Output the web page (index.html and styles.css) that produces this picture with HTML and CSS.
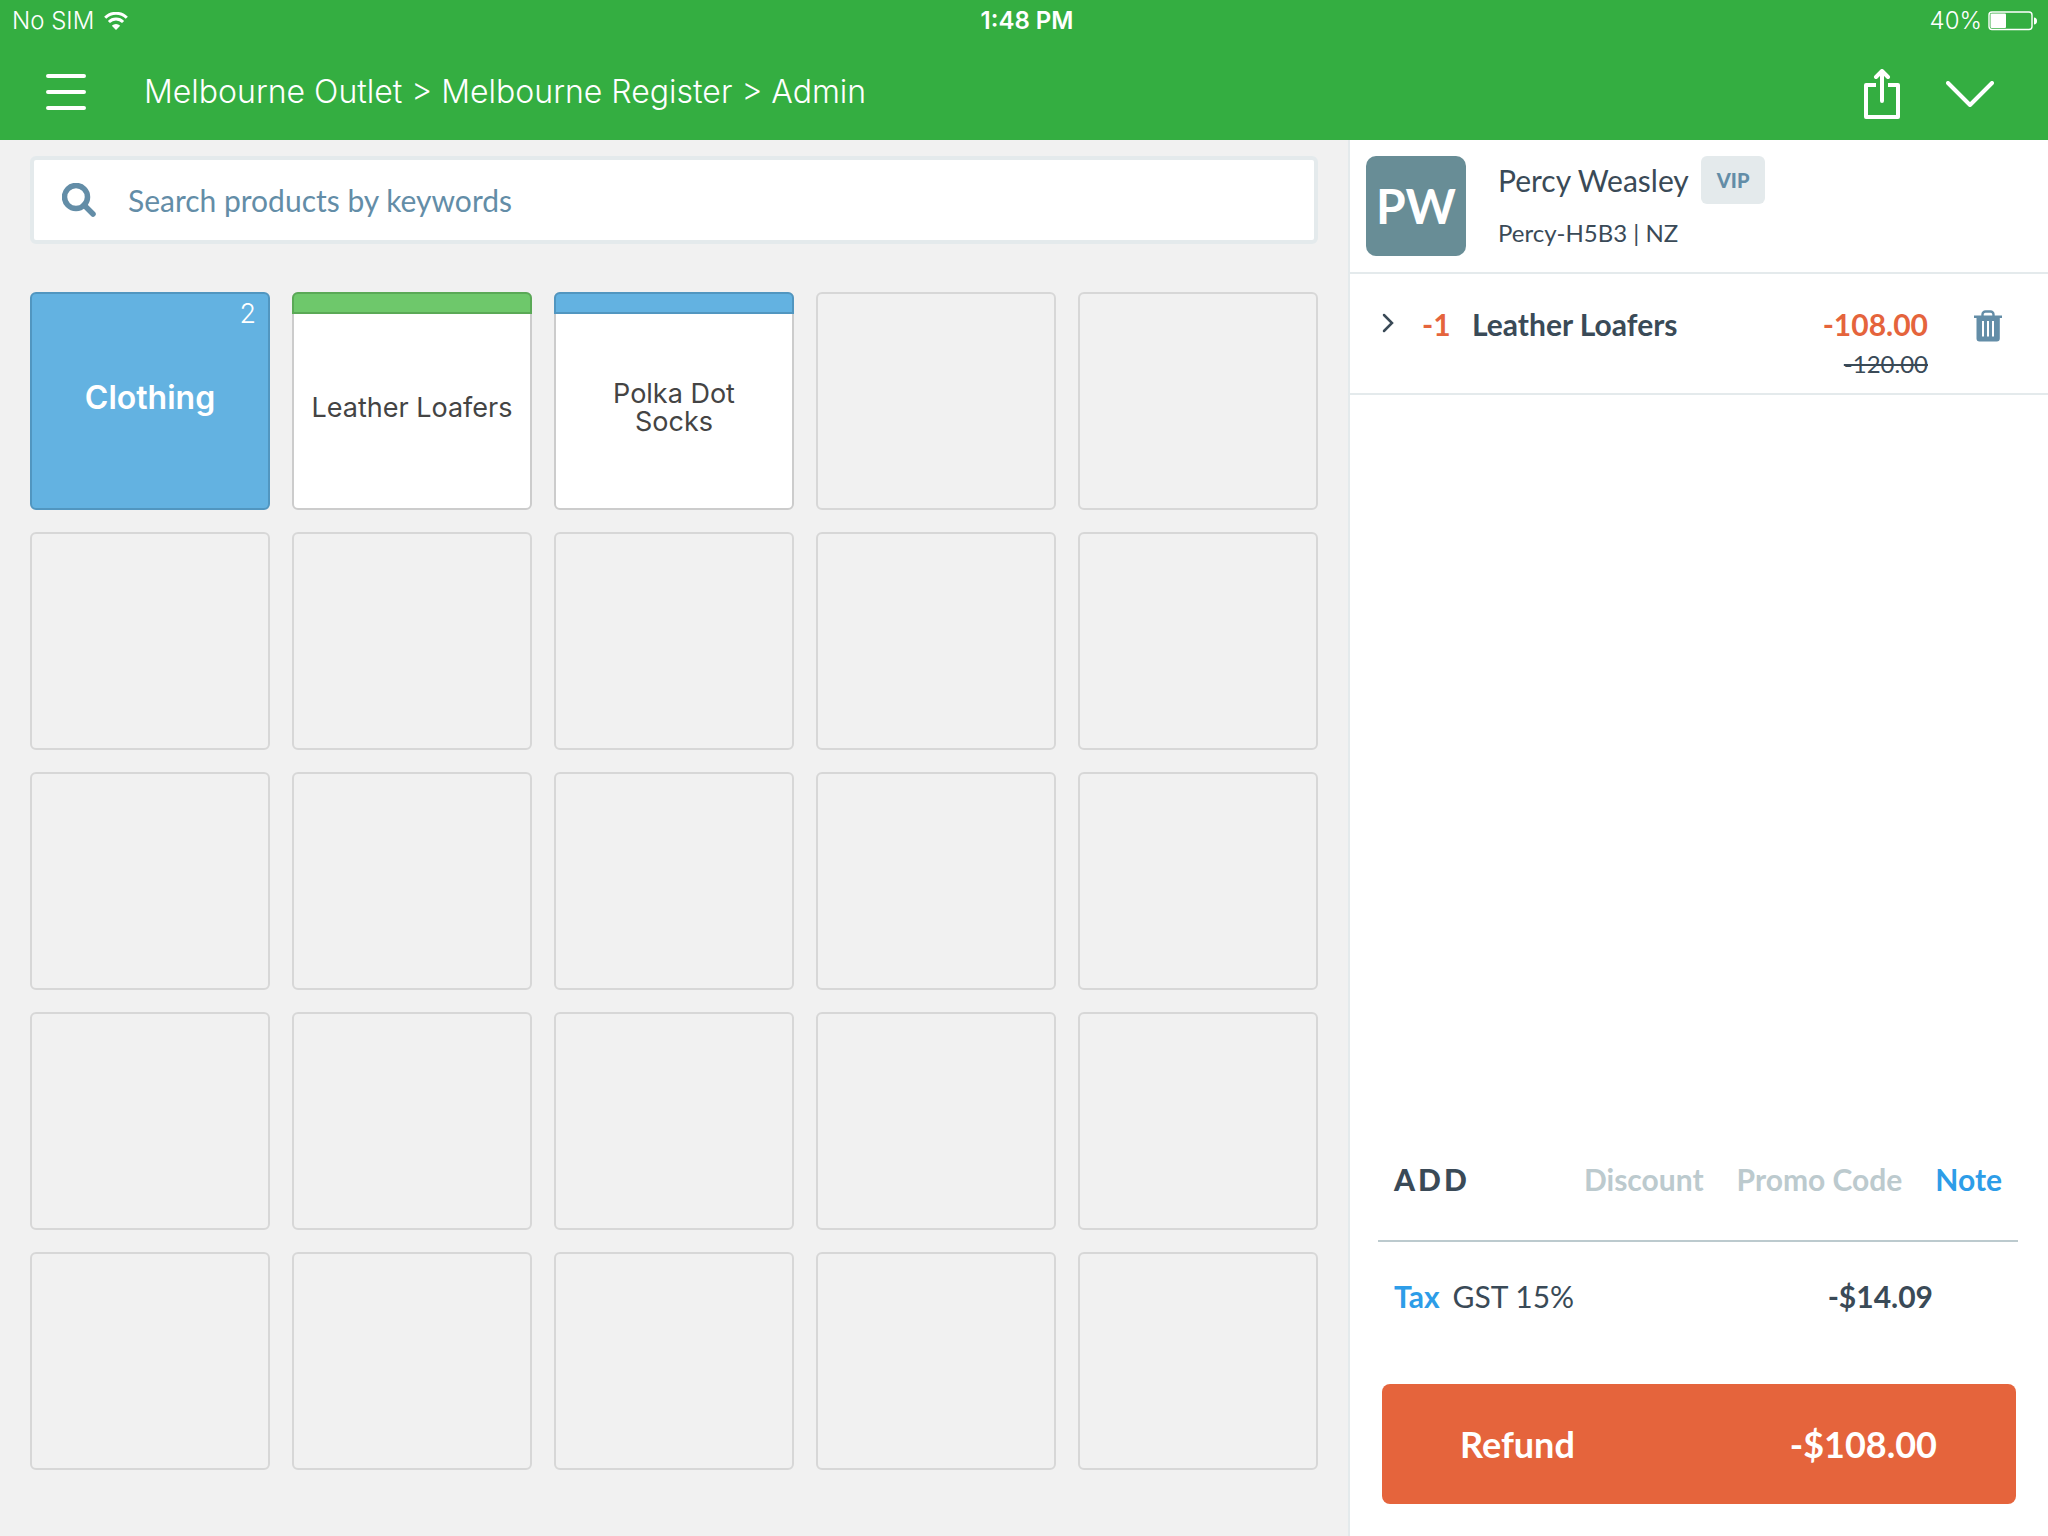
FILE: index.html
```html
<!DOCTYPE html>
<html lang="en">
<head>
<meta charset="utf-8">
<meta name="viewport" content="width=device-width, initial-scale=1">
<title>Melbourne Register</title>
<link rel="stylesheet" href="styles.css">
</head>
<body>
<div class="app">
  <header class="header">
    <div class="status">
      <div class="status-left">
        <span>No SIM</span>
        <svg class="wifi" width="24" height="18" viewBox="0 0 24 18" aria-hidden="true">
          <path d="M1.2 5.8a15.2 15.2 0 0 1 21.6 0" fill="none" stroke="#fff" stroke-width="3"/>
          <path d="M4.9 10a10 10 0 0 1 14.2 0" fill="none" stroke="#fff" stroke-width="3"/>
          <path d="M12 18l-4.2-4.2a6 6 0 0 1 8.4 0z" fill="#fff"/>
        </svg>
      </div>
      <div class="status-time">1:48 PM</div>
      <div class="status-right">
        <span>40%</span>
        <svg width="50" height="20" viewBox="0 0 50 20" aria-hidden="true">
          <rect x="1" y="1" width="43" height="17.5" rx="3" fill="none" stroke="#fff" stroke-width="1.4"/>
          <rect x="2.500" y="2.500" width="15.500" height="14.500" rx="1" fill="#fff"/>
          <path d="M46 6.500c1.800 0 3 1.200 3 3.500s-1.200 3.500-3 3.500z" fill="#fff"/>
        </svg>
      </div>
    </div>
    <div class="navbar">
      <button class="icon-button" type="button" aria-label="Menu">
        <svg width="40" height="36" viewBox="0 0 40 36"><path d="M2 2h36M2 18h36M2 34h36" stroke="#fff" stroke-width="4" stroke-linecap="round"/></svg>
      </button>
      <h1 class="title">Melbourne Outlet &gt; Melbourne Register &gt; Admin</h1>
      <div class="nav-actions">
        <button class="icon-button" type="button" aria-label="Share">
          <svg width="36" height="50" viewBox="0 0 36 50"><path d="M12 16H2v32h32V16H24" fill="none" stroke="#fff" stroke-width="4" stroke-linejoin="round"/><path d="M18 32V3M12 8l6-6 6 6" fill="none" stroke="#fff" stroke-width="4" stroke-linejoin="round" stroke-linecap="round"/></svg>
        </button>
        <button class="icon-button" type="button" aria-label="More">
          <svg width="48" height="26" viewBox="0 0 48 26"><path d="M2 2l22 22L46 2" fill="none" stroke="#fff" stroke-width="4" stroke-linecap="round" stroke-linejoin="round"/></svg>
        </button>
      </div>
    </div>
  </header>

  <div class="content">
    <main class="catalog">
      <label class="search">
        <svg width="34" height="34" viewBox="0 0 34 34" aria-hidden="true"><circle cx="14" cy="14" r="11.500" fill="none" stroke="#638da7" stroke-width="5.500"/><path d="M22 22l9 9" stroke="#638da7" stroke-width="5.500" stroke-linecap="round"/></svg>
        <input type="text" placeholder="Search products by keywords" aria-label="Search products by keywords">
      </label>
      <div class="tiles">
        <button class="tile folder" type="button"><span class="count">2</span>Clothing</button>
        <button class="tile product" type="button"><span class="band green"></span><span class="name">Leather Loafers</span></button>
        <button class="tile product" type="button"><span class="band blue"></span><span class="name">Polka Dot Socks</span></button>
        <div class="tile"></div><div class="tile"></div>
        <div class="tile"></div><div class="tile"></div><div class="tile"></div><div class="tile"></div><div class="tile"></div>
        <div class="tile"></div><div class="tile"></div><div class="tile"></div><div class="tile"></div><div class="tile"></div>
        <div class="tile"></div><div class="tile"></div><div class="tile"></div><div class="tile"></div><div class="tile"></div>
        <div class="tile"></div><div class="tile"></div><div class="tile"></div><div class="tile"></div><div class="tile"></div>
      </div>
    </main>

    <aside class="sale">
      <section class="customer">
        <div class="avatar">PW</div>
        <div class="customer-info">
          <div class="customer-name"><span>Percy Weasley</span><span class="badge">VIP</span></div>
          <div class="customer-code">Percy-H5B3 | NZ</div>
        </div>
      </section>
      <section class="line-item">
        <button class="icon-button" type="button" aria-label="Expand">
          <svg width="12" height="20" viewBox="0 0 12 20"><path d="M2 2l8 8-8 8" fill="none" stroke="#3a4a57" stroke-width="2.500" stroke-linecap="round"/></svg>
        </button>
        <span class="quantity">-1</span>
        <span class="item-name">Leather Loafers</span>
        <div class="prices">
          <span class="price">-108.00</span>
          <s class="old-price">-120.00</s>
        </div>
        <button class="icon-button" type="button" aria-label="Remove">
          <svg width="28" height="32" viewBox="0 0 28 32"><path d="M8.500 6V4.500a3 3 0 0 1 3-3h5a3 3 0 0 1 3 3V6" fill="none" stroke="#638da7" stroke-width="2.400"/><path fill="#638da7" fill-rule="evenodd" d="M0 5.500h28V8h-2.200v20.500a3 3 0 0 1-3 3H5.500a3 3 0 0 1-3-3V8H0zM8 11v15.500h2V11zm5 0v15.500h2V11zm5 0v15.500h2V11z"/></svg>
        </button>
      </section>

      <section class="totals">
        <div class="add-row">
          <h2 class="add-title">ADD</h2>
          <button class="link" type="button" disabled>Discount</button>
          <button class="link" type="button" disabled>Promo Code</button>
          <button class="link" type="button">Note</button>
        </div>
        <div class="tax-row">
          <a class="link" href="#tax">Tax</a>
          <span>GST 15%</span>
          <span class="tax-amount">-$14.09</span>
        </div>
        <button class="refund" type="button"><span>Refund</span><span>-$108.00</span></button>
      </section>
    </aside>
  </div>
</div>
</body>
</html>
```
FILE: styles.css
```css
* { box-sizing: border-box; }

body {
  margin: 0;
  background: #f1f1f1;
  color: #3a4a57;
  font-family: Lato, sans-serif;
  font-size: 30px;
  line-height: 36px;
}

button, input { font: inherit; color: inherit; }

button {
  padding: 0;
  border: 0;
  background: none;
}

svg { display: block; flex: none; }

.app {
  display: flex;
  flex-direction: column;
  min-height: 100vh;
}

.header {
  background: #34ae41;
  color: #fff;
  font-family: Inter, sans-serif;
}

.status {
  display: grid;
  grid-template-columns: 1fr auto 1fr;
  align-items: center;
  height: 42px;
  padding: 0 10px 0 12px;
  font-size: 24px;
}

.status-left, .status-right {
  display: flex;
  align-items: center;
  gap: 10px;
}

.status-left { font-weight: 300; }
.status-right { justify-content: flex-end; gap: 6px; font-weight: 300; }
.status-time { padding-left: 4px; font-weight: 600; }

.navbar {
  display: flex;
  align-items: center;
  gap: 42px;
  height: 98px;
  padding: 2px 54px 0 46px;
}

.title {
  flex: 1;
  margin: 0;
  padding-left: 16px;
  font-size: 32px;
  font-weight: 300;
}

.nav-actions {
  display: flex;
  align-items: center;
  gap: 46px;
  padding-top: 4px;
}

.content {
  display: grid;
  grid-template-columns: minmax(0, 1fr) 700px;
  flex: 1;
}

.catalog { padding: 16px 30px; }

.search {
  display: flex;
  align-items: center;
  gap: 32px;
  height: 88px;
  margin-bottom: 48px;
  padding: 0 28px;
  border: 4px solid #e4eaec;
  border-radius: 6px;
  background: #fff;
}

.search input {
  flex: 1;
  min-width: 0;
  padding: 0;
  border: 0;
  outline: 0;
  background: none;
}

.search input::placeholder { color: #638da7; opacity: 1; }

.tiles {
  display: grid;
  grid-template-columns: repeat(5, minmax(0, 1fr));
  grid-auto-rows: 218px;
  gap: 22px;
}

.tile {
  position: relative;
  display: flex;
  border: 2px solid #d7d7d7;
  border-radius: 6px;
  font-family: Inter, sans-serif;
}

.folder {
  align-items: center;
  justify-content: center;
  padding-bottom: 6px;
  border-color: #5196c0;
  background: #63b2e1;
  color: #fff;
  font-size: 32px;
  font-weight: 600;
}

.count {
  position: absolute;
  top: 2px;
  right: 12px;
  font-size: 27px;
  font-weight: 300;
}

.product {
  flex-direction: column;
  border-color: #cccccc;
  background: #fff;
  color: #444;
  font-size: 27px;
  line-height: 28px;
}

.band {
  height: 22px;
  margin: -2px -2px 0;
  border: 2px solid;
  border-radius: 6px 6px 0 0;
}

.green { border-color: #5aa956; background: #6ec86b; }
.blue { border-color: #5196c0; background: #63b2e1; }

.name {
  display: flex;
  flex: 1;
  align-items: center;
  align-self: center;
  max-width: 204px;
  padding-bottom: 6px;
  text-align: center;
}

.sale {
  display: flex;
  flex-direction: column;
  border-left: 2px solid #e4eaec;
  background: #fff;
}

.customer {
  display: flex;
  gap: 32px;
  padding: 16px;
  border-bottom: 2px solid #e4eaec;
}

.avatar {
  width: 100px;
  height: 100px;
  border-radius: 10px;
  background: #688d96;
  color: #fff;
  font-size: 48px;
  font-weight: 700;
  line-height: 100px;
  text-align: center;
}

.customer-name {
  display: flex;
  align-items: center;
  gap: 12px;
  margin-bottom: 13px;
}

.badge {
  padding: 0 16px;
  border-radius: 6px;
  background: #e4eaec;
  color: #638da7;
  font-size: 20px;
  font-weight: 900;
  line-height: 48px;
}

.customer-code { font-size: 24px; line-height: 32px; }

.line-item {
  display: flex;
  align-items: flex-start;
  padding: 32px 46px 13px 32px;
  border-bottom: 2px solid #e4eaec;
}

.line-item .icon-button { padding-top: 4px; }
.line-item .icon-button:first-child { padding-top: 7px; }

.quantity {
  width: 50px;
  margin-left: 28px;
  color: #e5643c;
  font-weight: 700;
}

.item-name { flex: 1; font-weight: 700; }

.prices {
  display: flex;
  flex-direction: column;
  align-items: flex-end;
  gap: 6px;
  margin-right: 46px;
}

.price { color: #e5643c; font-weight: 700; }
.old-price { font-size: 24px; line-height: 32px; }

.totals {
  margin-top: auto;
  padding: 0 30px 32px 28px;
}

.add-row {
  display: flex;
  align-items: center;
  gap: 33px;
  padding: 0 16px 43px;
  border-bottom: 2px solid #bccace;
}

.add-title {
  flex: 1;
  margin: 0;
  font-size: 30px;
  font-weight: 900;
  letter-spacing: 3px;
}

.link {
  color: #2d9de8;
  font-weight: 700;
  text-decoration: none;
}

.link:disabled { color: #bccace; }

.tax-row {
  display: flex;
  gap: 13px;
  padding: 36px 85px 70px 16px;
}

.tax-amount { margin-left: auto; font-weight: 700; }

.refund {
  display: flex;
  align-items: center;
  justify-content: space-between;
  width: calc(100% - 6px);
  height: 120px;
  margin: 0 2px 0 4px;
  padding: 0 79px 0 78px;
  border-radius: 8px;
  background: #e5643c;
  color: #fff;
  font-size: 36px;
  font-weight: 700;
}
```
